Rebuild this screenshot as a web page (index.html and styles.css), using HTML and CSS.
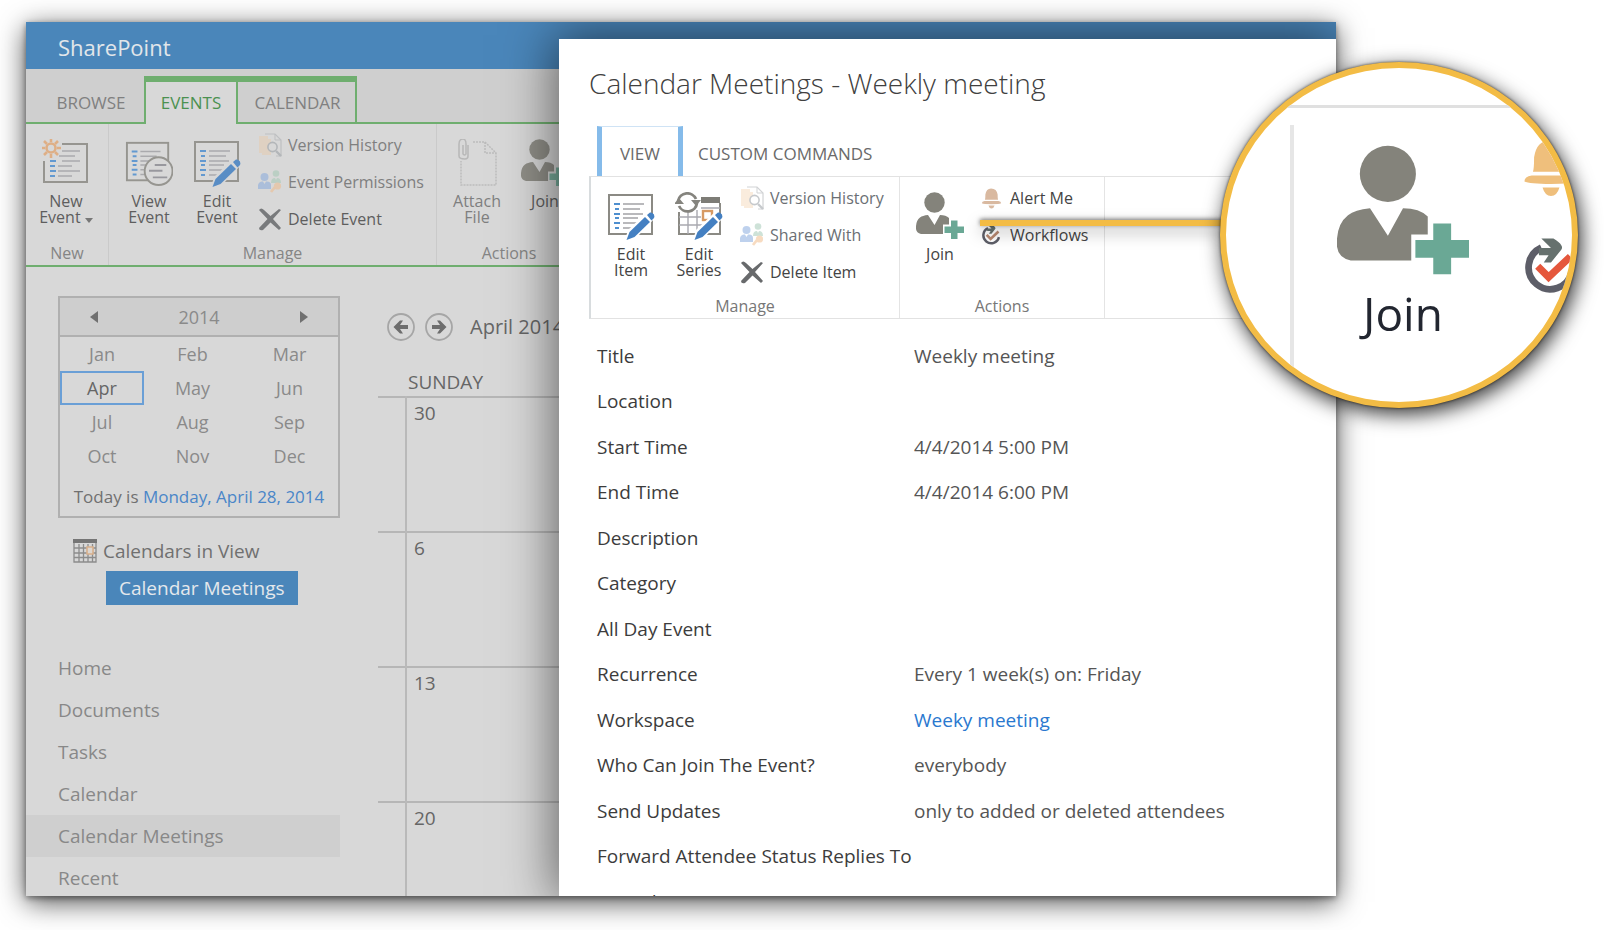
FILE: index.html
```html
<!DOCTYPE html>
<html lang="en">
<head>
<meta charset="utf-8">
<title>Calendar Meetings - Weekly meeting</title>
<link rel="stylesheet" href="styles.css">
</head>
<body>
<svg class="sprite" aria-hidden="true">
  <symbol id="list" viewBox="0 0 48 48">
    <rect x="2" y="3" width="43" height="39" fill="none" stroke="#8b8a84" stroke-width="2"/>
    <path d="M7 12h6M8 17h4M7 22h6M8 26h4M7 31h6M8 36h4" stroke="#4f8fcf" stroke-width="2"/>
    <path d="M16 12h21M16 17h17M16 22h20M16 26h15M16 31h21M16 36h13" stroke="#a3a3a6" stroke-width="1.6"/>
  </symbol>
  <symbol id="pencil" viewBox="0 0 48 48">
    <path fill="var(--paper)" d="M18 48L21 38L41 19L48 26L29 46Z"/>
    <path d="M19.500 48L22.500 40L38 25L43 30L27.500 45Z" fill="#4480c2"/>
    <path d="M40 23L43 20.500Q45 20 47 22.500Q48 25 46.500 26.500L44.500 28.500Z" fill="#4480c2"/>
  </symbol>
  <symbol id="edit" viewBox="0 0 48 48"><use href="#list"/><use href="#pencil"/></symbol>
  <symbol id="view" viewBox="0 0 50 48">
    <use href="#list" width="48" height="48"/>
    <circle fill="var(--paper)" cx="35" cy="32.500" r="14.500" stroke="#8b8a84" stroke-width="2"/>
    <path d="M31 26h12M25 32h14M29 39h15" stroke="#8e8d95" stroke-width="2"/>
  </symbol>
  <symbol id="new" viewBox="0 0 48 48">
    <path d="M20 5H45V43H2V22" fill="none" stroke="#8b8a84" stroke-width="2"/>
    <path d="M8 22h6M8 27h5M8 32h6M8 37h5" stroke="#4f8fcf" stroke-width="2"/>
    <path d="M20 12h18M17 17h16M20 22h18M16 27h14M16 32h22M16 37h14" stroke="#a3a3a6" stroke-width="1.600"/>
    <g stroke="#e0a878" fill="none" stroke-width="2.600"><circle cx="9" cy="9" r="4.500"/><path d="M9 -1V3M9 15V19M-1 9H3M15 9H19M2 2L5 5M13 13L16 16M2 16L5 13M13 5L16 2"/></g>
  </symbol>
  <symbol id="series" viewBox="0 0 48 48">
    <path d="M26 5H45V11H26Z" fill="#7d7c76"/>
    <path d="M4 20V42H45V11" fill="none" stroke="#8b8a84" stroke-width="2"/>
    <path d="M4 33H34M4 25H26M13 20V42M22 18V42M31 31V42M26 16H45" fill="none" stroke="#a9a9b0" stroke-width="1.400"/>
    <rect x="28" y="19" width="9" height="9" fill="var(--paper)" stroke="#d79a63" stroke-width="2.400"/>
    <path d="M3 9A9.500 9.500 0 0 1 21 7M22 11A9.500 9.500 0 0 1 4 14" fill="none" stroke="#85847e" stroke-width="2.800"/>
    <path d="M16 8H26L21 14ZM-1 12H9L4 6Z" fill="#85847e"/>
    <use href="#pencil"/>
  </symbol>
  <symbol id="history" viewBox="0 0 24 24">
    <path d="M1 3H10V20H1ZM4 6H13V22H4Z" fill="#f0c28f" fill-opacity=".6"/>
    <path d="M7 1H17L23 7V23H18" fill="none" stroke="#a4a7ab" stroke-width="1.200"/>
    <path d="M17 1V7H23" fill="none" stroke="#a4a7ab"/>
    <circle fill="var(--paper)" cx="14.500" cy="14" r="4.600" stroke="#8f959b" stroke-width="1.600"/>
    <path d="M18 18L23 23" stroke="#8f959b" stroke-width="2.400"/>
  </symbol>
  <symbol id="people" viewBox="0 0 24 24">
    <g fill="#7fa5dc"><circle cx="6.500" cy="7" r="4"/><path d="M0 19V15Q1 11 5 11.500L6.500 14L8 11.500Q13 11 13 15V19Z"/></g>
    <g fill="#9fc7b2"><circle cx="18" cy="3.500" r="3.300"/><path d="M13 13Q13 8 17 8L18 10L19 8Q23 8 23 13Z"/></g>
    <path d="M13 22L17 17" stroke="#f1b985" stroke-width="2.800"/><circle cx="19.500" cy="16" r="3.600" fill="#f1b985"/>
  </symbol>
  <symbol id="delete" viewBox="0 0 24 24">
    <path d="M1 3Q3 0 6 3L12.500 9L21 2L23 3L15 12L23 21L21 23L12.500 15.500L5 23Q1 24 1 21L9.500 12Z" fill="#686a6c"/>
  </symbol>
  <symbol id="attach" viewBox="0 0 40 48">
    <path d="M16 3H28L39 14V46H4V22M28 3V14H39" fill="none" stroke="#a2a2a2" stroke-width="1.500" stroke-dasharray="2 1"/>
    <path d="M11 6V17Q11 20 8 20Q2 20 2 17V5Q2 0 6 0Q9 0 9 5V15Q8 17 6 15V6" fill="none" stroke="#989898" stroke-width="1.500"/>
  </symbol>
  <symbol id="join" viewBox="0 0 48 48">
    <circle cx="18.500" cy="10.500" r="10.200" fill="#84837b"/>
    <path d="M0 37Q-0.500 29 4 25.500Q6.500 23.500 12 23L18.500 33L24 23Q30 23 33 26V32.500H27V42H5Q0.500 41 0 37Z" fill="#84837b"/>
    <path d="M35 28.500h6.500v6H48v6.500H41.500v6H35v-6H28.500V34.500H35Z" fill="#6aa895"/>
  </symbol>
  <symbol id="bell" viewBox="0 0 24 24">
    <path d="M4.500 14Q5 13 5 8Q6 1 11.500 1Q18 1 19 8Q19 13 19.500 14Z" fill="currentColor"/>
    <path d="M1 18Q1 16 4 15.500H20Q23 16 23 18Q21 19 12 19Q3 19 1 18ZM8.500 20.500H15.500Q14.500 24 12 24Q9.500 24 8.500 20.500Z" fill="currentColor"/>
  </symbol>
  <symbol id="flow" viewBox="0 0 24 24">
    <path d="M8 4.800A9 9 0 1 0 20.500 15" fill="none" stroke="#5d5e68" stroke-width="2.800"/>
    <path d="M8 1H13Q18 4 16 6L12 11H9L11 8H7V5H12Z" fill="#66716e"/>
    <path d="M6.500 12.500L11 17L20 8.500" fill="none" stroke="var(--tick)" stroke-width="3"/>
  </symbol>
  <symbol id="calendar" viewBox="0 0 24 24">
    <path d="M1 1H23V23H1Z M1 9H23M1 14H23M1 18.500H23M6 5V23M10.500 5V23M15 5V23M19.500 5V23" fill="none" stroke="#8c8c8c" stroke-width="1.300"/>
    <path d="M0 0H24V4H0Z" fill="#757575"/>
    <path d="M14 8H20V15H14Z" fill="#dcd6d0" stroke="#d8b08c" stroke-width="1.600"/>
  </symbol>
  <symbol id="arrow" viewBox="0 0 28 28">
    <circle cx="14" cy="14" r="13" fill="none" stroke="#a6a6a6" stroke-width="1.800"/>
    <path d="M6.500 14L13 7.500H16L13 12H21V16H13L16 20.500H13Z" fill="#6d6d6d"/>
  </symbol>
</svg>

<div class="window">
  <header class="suite">SharePoint</header>
  <nav class="tabs" aria-label="Ribbon tabs">
    <button class="tab tab-first">BROWSE</button>
    <button class="tab tab-active">EVENTS</button>
    <button class="tab tab-related">CALENDAR</button>
    <span class="tab-rest"></span>
  </nav>
  <section class="ribbon page-ribbon">
    <div class="group group-new">
      <div class="tools">
        <button class="big"><svg class="icon-l"><use href="#new"/></svg><span>New<br>Event <i class="caret"></i></span></button>
      </div>
      <div class="group-name">New</div>
    </div>
    <div class="group group-manage">
      <div class="tools">
        <button class="big"><svg class="icon-l"><use href="#view"/></svg><span>View<br>Event</span></button>
        <button class="big"><svg class="icon-l"><use href="#edit"/></svg><span>Edit<br>Event</span></button>
        <div class="stack">
          <button class="small muted"><svg class="icon-s"><use href="#history"/></svg>Version History</button>
          <button class="small muted"><svg class="icon-s"><use href="#people"/></svg>Event Permissions</button>
          <button class="small"><svg class="icon-s"><use href="#delete"/></svg>Delete Event</button>
        </div>
      </div>
      <div class="group-name">Manage</div>
    </div>
    <div class="group group-actions">
      <div class="tools">
        <button class="big muted"><svg class="icon-l"><use href="#attach"/></svg><span>Attach<br>File</span></button>
        <button class="big"><svg class="icon-l"><use href="#join"/></svg><span>Join</span></button>
      </div>
      <div class="group-name">Actions</div>
    </div>
  </section>

  <div class="content">
    <aside class="side">
      <div class="picker">
        <div class="year">
          <button class="step" aria-label="Previous year"><svg width="10" height="14"><path d="M9 1V13L1 7Z"/></svg></button>
          <span>2014</span>
          <button class="step" aria-label="Next year"><svg width="10" height="14"><path d="M1 1V13L9 7Z"/></svg></button>
        </div>
        <div class="months">
          <button>Jan</button><button>Feb</button><button>Mar</button>
          <button class="current">Apr</button><button>May</button><button>Jun</button>
          <button>Jul</button><button>Aug</button><button>Sep</button>
          <button>Oct</button><button>Nov</button><button>Dec</button>
        </div>
        <p class="today">Today is <a href="#today">Monday, April 28, 2014</a></p>
      </div>
      <div class="in-view"><svg class="icon-s"><use href="#calendar"/></svg>Calendars in View</div>
      <a class="chip" href="#meetings">Calendar Meetings</a>
      <nav class="links" aria-label="Site">
        <a href="#home">Home</a>
        <a href="#documents">Documents</a>
        <a href="#tasks">Tasks</a>
        <a href="#calendar-list">Calendar</a>
        <a href="#meetings" class="selected">Calendar Meetings</a>
        <a href="#recent">Recent</a>
      </nav>
    </aside>
    <main class="month">
      <div class="month-bar">
        <button class="round" aria-label="Previous month"><svg><use href="#arrow"/></svg></button>
        <button class="round next" aria-label="Next month"><svg><use href="#arrow"/></svg></button>
        <span class="month-name">April 2014</span>
      </div>
      <table class="weeks">
        <thead><tr><td class="gutter"></td><th scope="col">SUNDAY</th></tr></thead>
        <tbody>
          <tr><td class="gutter"></td><td>30</td></tr>
          <tr><td class="gutter"></td><td>6</td></tr>
          <tr><td class="gutter"></td><td>13</td></tr>
          <tr><td class="gutter"></td><td>20</td></tr>
        </tbody>
      </table>
    </main>
  </div>

  <section class="dialog" role="dialog" aria-labelledby="dialog-title">
    <h1 id="dialog-title">Calendar Meetings - Weekly meeting</h1>
    <nav class="dialog-tabs" aria-label="Item tabs">
      <button class="dtab dtab-active">VIEW</button>
      <button class="dtab">CUSTOM COMMANDS</button>
    </nav>
    <div class="ribbon dialog-ribbon">
      <div class="group item-manage">
        <div class="tools">
          <button class="big"><svg class="icon-l"><use href="#edit"/></svg><span>Edit<br>Item</span></button>
          <button class="big"><svg class="icon-l"><use href="#series"/></svg><span>Edit<br>Series</span></button>
          <div class="stack">
            <button class="small muted"><svg class="icon-s"><use href="#history"/></svg>Version History</button>
            <button class="small muted"><svg class="icon-s"><use href="#people"/></svg>Shared With</button>
            <button class="small"><svg class="icon-s"><use href="#delete"/></svg>Delete Item</button>
          </div>
        </div>
        <div class="group-name">Manage</div>
      </div>
      <div class="group item-actions">
        <div class="tools">
          <button class="big"><svg class="icon-l"><use href="#join"/></svg><span>Join</span></button>
          <div class="stack">
            <button class="small"><svg class="icon-s bell"><use href="#bell"/></svg>Alert Me</button>
            <button class="small"><svg class="icon-s flow"><use href="#flow"/></svg>Workflows</button>
          </div>
        </div>
        <div class="group-name">Actions</div>
      </div>
    </div>
    <table class="fields">
      <tr><th scope="row">Title</th><td>Weekly meeting</td></tr>
      <tr><th scope="row">Location</th><td></td></tr>
      <tr><th scope="row">Start Time</th><td>4/4/2014 5:00 PM</td></tr>
      <tr><th scope="row">End Time</th><td>4/4/2014 6:00 PM</td></tr>
      <tr><th scope="row">Description</th><td></td></tr>
      <tr><th scope="row">Category</th><td></td></tr>
      <tr><th scope="row">All Day Event</th><td></td></tr>
      <tr><th scope="row">Recurrence</th><td>Every 1 week(s) on: Friday</td></tr>
      <tr><th scope="row">Workspace</th><td><a href="#workspace">Weeky meeting</a></td></tr>
      <tr><th scope="row">Who Can Join The Event?</th><td>everybody</td></tr>
      <tr><th scope="row">Send Updates</th><td>only to added or deleted attendees</td></tr>
      <tr><th scope="row">Forward Attendee Status Replies To</th><td></td></tr>
      <tr><th scope="row">Attendees</th><td></td></tr>
    </table>
  </section>
</div>

<div class="pointer"></div>
<div class="lens-view">
  <div class="lens-panel">
    <div class="lens-join"><svg><use href="#join"/></svg><span>Join</span></div>
  </div>
  <svg class="lens-bell"><use href="#bell"/></svg>
  <svg class="lens-flow"><use href="#flow"/></svg>
</div>
</body>
</html>
```
FILE: styles.css
```css
* { box-sizing: border-box; }

body {
  --paper: #fff;
  position: relative;
  margin: 0;
  min-height: 100vh;
  padding: 22px 268px 34px 26px;
  background: #fff;
  color: #666;
  font: 19px/24px "Open Sans", "Noto Sans", sans-serif;
  overflow: hidden;
}

button {
  border: 0;
  padding: 0;
  background: none;
  color: inherit;
  font: inherit;
}

a { color: #4a86c8; text-decoration: none; }
svg { display: block; overflow: visible; }
.sprite { position: absolute; width: 0; height: 0; }

.window {
  --paper: #d8d8d8;
  position: relative;
  display: flex;
  flex-direction: column;
  height: calc(100vh - 56px);
  overflow: hidden;
  background: var(--paper);
}

/* the shadow sits on the page, outside the clipped window */
body::before {
  content: "";
  position: absolute;
  inset: 22px 268px 34px 26px;
  box-shadow: 0 6px 26px rgba(0, 0, 0, .7), 0 2px 6px rgba(0, 0, 0, .4);
}

.suite {
  flex: none;
  height: 47px;
  padding: 0 32px;
  background: #4a86ba;
  color: #e2e6ea;
  font-size: 22px;
  line-height: 50px;
}

/* page ribbon */
.tabs {
  display: flex;
  flex: none;
  align-items: flex-end;
  height: 55px;
  background: #cfcfcf;
  color: #808080;
  font-size: 17px;
}
.tab {
  height: 48px;
  padding: 8px 0 0;
  border-bottom: 2px solid #6fae6f;
}
.tab-first { width: 118px; padding-left: 12px; }
.tab-active {
  width: 94px;
  padding: 0;
  border: 2px solid #6fae6f;
  border-top-width: 6px;
  border-bottom: 0;
  background: #d8d8d8;
  color: #4b9150;
}
.tab-related {
  width: 119px;
  padding: 2px 0 0 2px;
  border: solid #6fae6f;
  border-width: 6px 2px 2px 0;
}
.tab-rest { flex: 1; height: 48px; border-bottom: 2px solid #6fae6f; }

.ribbon { display: flex; flex: none; font-size: 16px; }
.page-ribbon {
  height: 143px;
  border-bottom: 2px solid #6fae6f;
  color: #5e5e5e;
}
.group {
  display: flex;
  flex: none;
  flex-direction: column;
  justify-content: space-between;
  border-right: 1px solid #cacaca;
}
.group-new { width: 83px; }
.group-manage { width: 328px; }
.group-actions { width: 145px; }
.tools { display: flex; padding-left: 6px; }
.big {
  display: flex;
  flex-direction: column;
  align-items: center;
  gap: 6px;
  width: 68px;
  padding-top: 15px;
  line-height: 16px;
}
.icon-l { width: 48px; height: 48px; }
.icon-s { flex: none; width: 24px; height: 24px; }
.stack { padding: 2px 0 0 7px; }
.small { display: flex; align-items: center; gap: 6px; height: 37px; white-space: nowrap; }
.page-ribbon svg { opacity: .85; }
.page-ribbon .muted { color: #7f7f7f; }
.ribbon .muted svg { opacity: .5; }
.group-name { color: #858585; text-align: center; }
.caret {
  display: inline-block;
  border: 4px solid transparent;
  border-top: 5px solid #777;
  border-bottom: 0;
}

/* sidebar */
.content { display: flex; flex: 1; gap: 38px; min-height: 0; }
.side { flex: none; width: 314px; padding-top: 29px; }
.picker {
  margin-left: 32px;
  border: 2px solid #b0b0b0;
  color: #8a8a8a;
  font-size: 18px;
}
.year {
  display: flex;
  align-items: center;
  justify-content: space-between;
  height: 39px;
  padding: 0 29px;
  border-bottom: 2px solid #b0b0b0;
  background: #cecece;
}
.step { fill: #707070; }
.months {
  display: grid;
  grid-template-columns: 84px 1fr 1fr;
  grid-auto-rows: 34px;
}
.months .current { border: 2px solid #6a9fd6; color: #666; }
.today { margin: 0; padding: 12px 0 7px; color: #707070; font-size: 17px; text-align: center; }
.in-view {
  display: flex;
  align-items: center;
  gap: 6px;
  margin: 21px 0 8px 47px;
  color: #707070;
}
.chip {
  display: inline-block;
  margin-left: 80px;
  padding: 5px 13px;
  background: #4a86ba;
  color: #e4e8ec;
}
.links { display: flex; flex-direction: column; margin-top: 42px; }
.links a { padding: 9px 32px; color: #888; }
.links .selected { background: #cfcfcf; }

/* month grid */
.month { flex: 1; padding-top: 44px; }
.month-bar { display: flex; align-items: center; gap: 10px; padding-left: 9px; height: 32px; }
.round svg { width: 28px; height: 28px; }
.next svg { transform: scaleX(-1); }
.month-name { margin-left: 7px; font-size: 20px; }
.weeks { width: 100%; margin-top: 25px; border-collapse: collapse; }
.weeks th { height: 29px; padding: 0 2px; font-weight: 400; text-align: left; }
.weeks td { padding: 3px 7px; vertical-align: top; }
.weeks tbody tr { height: 135px; border-top: 2px solid #b6b6b6; }
.weeks .gutter { width: 28px; padding: 0; }
.weeks tbody .gutter { border-right: 2px solid #b9b9b9; }

/* item dialog */
.dialog {
  --paper: #fff;
  position: absolute;
  inset: 17px 0 0 533px;
  padding: 24px 0 0 30px;
  background: var(--paper);
  color: #444;
  box-shadow: 0 0 48px 4px rgba(0, 0, 0, .55);
}
h1 {
  margin: 0 0 23px;
  color: #404040;
  font-size: 28px;
  font-weight: 300;
  line-height: 40px;
}
.dialog-tabs { display: flex; height: 50px; margin-left: 8px; color: #6a6a6a; font-size: 17px; }
.dtab { padding: 5px 15px 0; }
.dtab-active {
  width: 86px;
  padding: 4px 0 0;
  border: 5px solid #85bbea;
  border-top: 1px solid #cfe3f5;
  border-bottom: 0;
  background: #fff;
}
.dialog-ribbon {
  height: 143px;
  border: 1px solid #e2e2e2;
  border-left: 2px solid #d8dcde;
  border-right: 0;
}
.dialog-ribbon .group { border-color: #e4e4e4; }
.dialog-ribbon .muted { color: #6b6f74; }
.dialog-ribbon .group-name { color: #777; }
.item-manage { width: 309px; }
.item-actions { width: 205px; }
.bell, .flow { width: 21px; margin-right: 2px; }
.bell { color: #d9b9a0; }
.flow { height: 21px; --tick: #b98a72; }

.fields { margin: 14px 0 0 8px; border-spacing: 0; }
.fields tr { height: 45px; }
.fields tr:nth-child(even) { height: 46px; }
.fields th, .fields td { padding: 0; font-weight: 400; text-align: left; white-space: nowrap; }
.fields th { width: 317px; color: #3c3c3c; }
.fields td { color: #555; }
.fields a { color: #2a78cf; }

/* callout */
.pointer {
  position: absolute;
  top: 220px;
  left: 980px;
  width: 246px;
  height: 6px;
  background: #f3bc45;
  box-shadow: 0 6px 16px rgba(0, 0, 0, .35), 0 -1px 4px rgba(0, 0, 0, .5);
}
.lens-view {
  position: absolute;
  top: 62px;
  left: 1220px;
  width: 358px;
  height: 346px;
  overflow: hidden;
  border: 6px solid #f3bc45;
  border-radius: 50%;
  background: #fff;
  box-shadow: 0 0 3px rgba(0, 0, 0, .7);
  filter: drop-shadow(3px 6px 10px rgba(0, 0, 0, .8));
}
.lens-panel {
  margin-top: 37px;
  padding: 17px 0 0 64px;
  border-top: 3px solid #e0e0e0;
}
.lens-join {
  display: flex;
  flex-direction: column;
  align-items: center;
  gap: 4px;
  width: 222px;
  height: 260px;
  padding-top: 20px;
  border-left: 4px solid #e6e6e6;
  color: #222630;
  font-size: 46px;
  line-height: 64px;
}
.lens-join svg { width: 132px; height: 132px; }
.lens-bell, .lens-flow { position: absolute; left: 295px; width: 60px; height: 58px; }
.lens-bell { top: 70px; color: #efbf7c; }
.lens-flow { top: 168px; --tick: #e5573c; }
```
